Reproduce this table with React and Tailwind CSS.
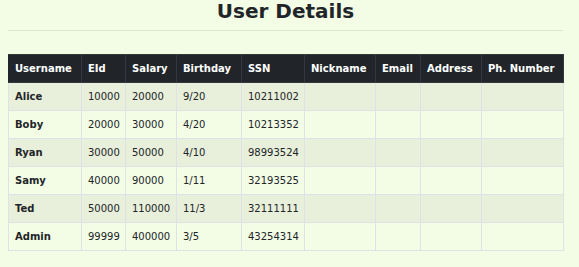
import React from 'react';

const users = [
  { name: 'Alice', eid: '10000', salary: '20000', birthday: '9/20', ssn: '10211002' },
  { name: 'Boby', eid: '20000', salary: '30000', birthday: '4/20', ssn: '10213352' },
  { name: 'Ryan', eid: '30000', salary: '50000', birthday: '4/10', ssn: '98993524' },
  { name: 'Samy', eid: '40000', salary: '90000', birthday: '1/11', ssn: '32193525' },
  { name: 'Ted', eid: '50000', salary: '110000', birthday: '11/3', ssn: '32111111' },
  { name: 'Admin', eid: '99999', salary: '400000', birthday: '3/5', ssn: '43254314' },
];

const headers = ['Username', 'EId', 'Salary', 'Birthday', 'SSN', 'Nickname', 'Email', 'Address', 'Ph. Number'];

export default function App() {
  return (
    <div
      className="min-h-[267px] bg-[#f3fde5] text-[#212529]"
      style={{ fontFamily: '"DejaVu Sans", sans-serif' }}
    >
      <div className="ml-2 w-[555px]">
        <h2 className="text-center text-[20px] leading-[22px] font-bold">User Details</h2>
        <hr className="mt-2 border-t border-[#dbe4cf]" />

        <table className="mt-[23px] w-[555px] table-fixed border-collapse text-[10px]">
          <colgroup>
            <col className="w-[73px]" />
            <col className="w-[44px]" />
            <col className="w-[51px]" />
            <col className="w-[65px]" />
            <col className="w-[63px]" />
            <col className="w-[71px]" />
            <col className="w-[45px]" />
            <col className="w-[61px]" />
            <col className="w-[82px]" />
          </colgroup>
          <thead className="bg-[#212529] text-white">
            <tr className="h-[28px]">
              {headers.map((h) => (
                <th
                  key={h}
                  className="border border-[#32383e] border-l-[#dee2e6] first:border-l-[#212529] px-[6px] text-left font-bold whitespace-nowrap"
                >
                  {h}
                </th>
              ))}
            </tr>
          </thead>
          <tbody>
            {users.map((u, i) => (
              <tr key={u.name} className={`h-[28px] ${i % 2 === 0 ? 'bg-[#e8efda]' : ''}`}>
                <td className="border border-[#dee2e6] px-[6px] font-bold">{u.name}</td>
                <td className="border border-[#dee2e6] px-[6px]">{u.eid}</td>
                <td className="border border-[#dee2e6] px-[6px]">{u.salary}</td>
                <td className="border border-[#dee2e6] px-[6px]">{u.birthday}</td>
                <td className="border border-[#dee2e6] px-[6px]">{u.ssn}</td>
                <td className="border border-[#dee2e6] px-[6px]"></td>
                <td className="border border-[#dee2e6] px-[6px]"></td>
                <td className="border border-[#dee2e6] px-[6px]"></td>
                <td className="border border-[#dee2e6] px-[6px]"></td>
              </tr>
            ))}
          </tbody>
        </table>
      </div>
    </div>
  );
}
